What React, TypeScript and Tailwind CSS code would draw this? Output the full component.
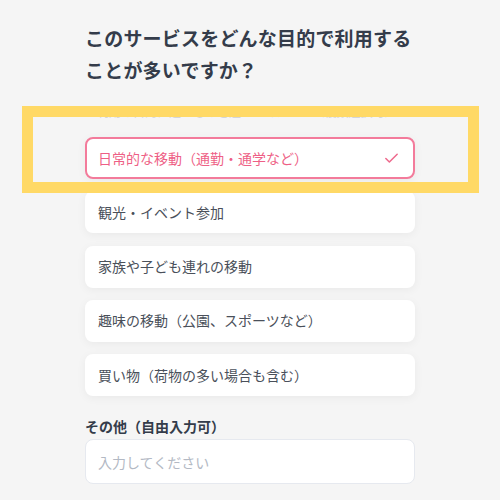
import React, { useState } from 'react';
import { Check } from 'lucide-react';

const options = [
  '日常的な移動（通勤・通学など）',
  '観光・イベント参加',
  '家族や子ども連れの移動',
  '趣味の移動（公園、スポーツなど）',
  '買い物（荷物の多い場合も含む）',
];

export default function App() {
  const [selected, setSelected] = useState<number[]>([0]);

  const toggle = (i: number) =>
    setSelected((s) => (s.includes(i) ? s.filter((x) => x !== i) : [...s, i]));

  return (
    <div
      className="relative min-h-[500px] w-[500px] overflow-hidden bg-[#f5f5f5] px-[85px] pt-[22px]"
      style={{ fontFamily: '"Noto Sans CJK JP", "Noto Sans", sans-serif' }}
    >
      <h1 className="text-[19px] font-bold leading-[32px] tracking-[0.2px] text-[#343c4a]">
        このサービスをどんな目的で利用することが多いですか？
      </h1>
      <p className="mt-[17px] text-[12px] leading-[18px] text-[#d2d4d8]">
        ご利用の目的に近いものを選んでください（複数選択可）
      </p>

      <div className="mt-[16px] flex flex-col gap-[12.25px]">
        {options.map((label, i) => {
          const active = selected.includes(i);
          return (
            <button
              key={label}
              onClick={() => toggle(i)}
              className={`flex h-[42px] w-full items-center justify-between rounded-lg bg-white px-[11px] text-left text-[14px] shadow-[0_2px_10px_rgba(0,0,0,0.05)] ${
                active ? 'border-2 border-[#f37b9b] text-[#ee5f86]' : 'border-2 border-white text-[#4a505a]'
              }`}
            >
              <span>{label}</span>
              {active && <Check size={17} strokeWidth={2.2} className="mr-[2px] text-[#ee6b8e]" />}
            </button>
          );
        })}
      </div>

      <label className="mt-[20px] block text-[14px] font-bold leading-5 text-[#343c4a]">
        その他（自由入力可）
      </label>
      <input
        type="text"
        placeholder="入力してください"
        className="mt-[3px] h-[45px] w-full rounded-lg border border-[#e6e9ef] bg-white px-[12px] text-[14px] text-[#4a505a] outline-none placeholder:text-[#b3b9c4]"
      />

      <div className="pointer-events-none absolute left-[22px] top-[105.5px] h-[87.5px] w-[457px] border-[11.5px] border-[#ffd966]" />
    </div>
  );
}
